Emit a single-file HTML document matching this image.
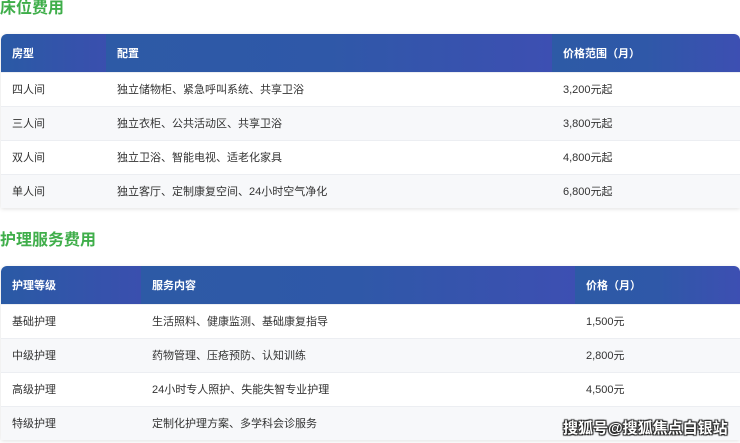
<html><head><style>
body{margin:0;width:740px;height:443px;overflow:hidden;background:#fff;font-family:"Liberation Sans","Noto Sans CJK SC",sans-serif;position:relative}
h2{position:absolute;left:0;margin:0;font-size:16px;font-weight:bold;color:#3fae4a;line-height:18px}
table{position:absolute;left:1px;width:739px;border-collapse:collapse;font-size:11px;color:#333;border-radius:6px 6px 0 0;overflow:hidden;box-shadow:0 1px 4px rgba(0,0,0,.12)}
th{height:38px;color:#fff;text-align:left;font-weight:bold;background:linear-gradient(90deg,#2d5aa6,#2f58a8 50%,#3d4fb2);padding:0 0 0 11px}
th:first-child{background:linear-gradient(90deg,#2a5aa5,#3a4fae)}
td{height:34px;padding:0 0 0 11px;border-top:1px solid #eceef2;box-sizing:content-box}
tr:nth-child(odd) td{background:#f7f8fa}
.wm{position:absolute;left:563px;top:417px;font-size:15px;font-weight:bold;color:#fff;text-shadow:0 0 1px #222,1px 1px 1px #222,-1px -1px 1px #222,1px -1px 1px #222,-1px 1px 1px #222}
</style></head><body>
<h2 style="top:0">床位费用</h2>
<table style="top:34px">
<tr><th style="width:94px">房型</th><th style="width:435px">配置</th><th>价格范围（月）</th></tr>
<tr><td>四人间</td><td>独立储物柜、紧急呼叫系统、共享卫浴</td><td>3,200元起</td></tr>
<tr><td>三人间</td><td>独立衣柜、公共活动区、共享卫浴</td><td>3,800元起</td></tr>
<tr><td>双人间</td><td>独立卫浴、智能电视、适老化家具</td><td>4,800元起</td></tr>
<tr><td>单人间</td><td>独立客厅、定制康复空间、24小时空气净化</td><td>6,800元起</td></tr>
</table>
<h2 style="top:232px">护理服务费用</h2>
<table style="top:266px">
<tr><th style="width:129px">护理等级</th><th style="width:423px">服务内容</th><th>价格（月）</th></tr>
<tr><td>基础护理</td><td>生活照料、健康监测、基础康复指导</td><td>1,500元</td></tr>
<tr><td>中级护理</td><td>药物管理、压疮预防、认知训练</td><td>2,800元</td></tr>
<tr><td>高级护理</td><td>24小时专人照护、失能失智专业护理</td><td>4,500元</td></tr>
<tr><td>特级护理</td><td>定制化护理方案、多学科会诊服务</td><td></td></tr>
</table>
<div class="wm">搜狐号@搜狐焦点白银站</div>
</body></html>
